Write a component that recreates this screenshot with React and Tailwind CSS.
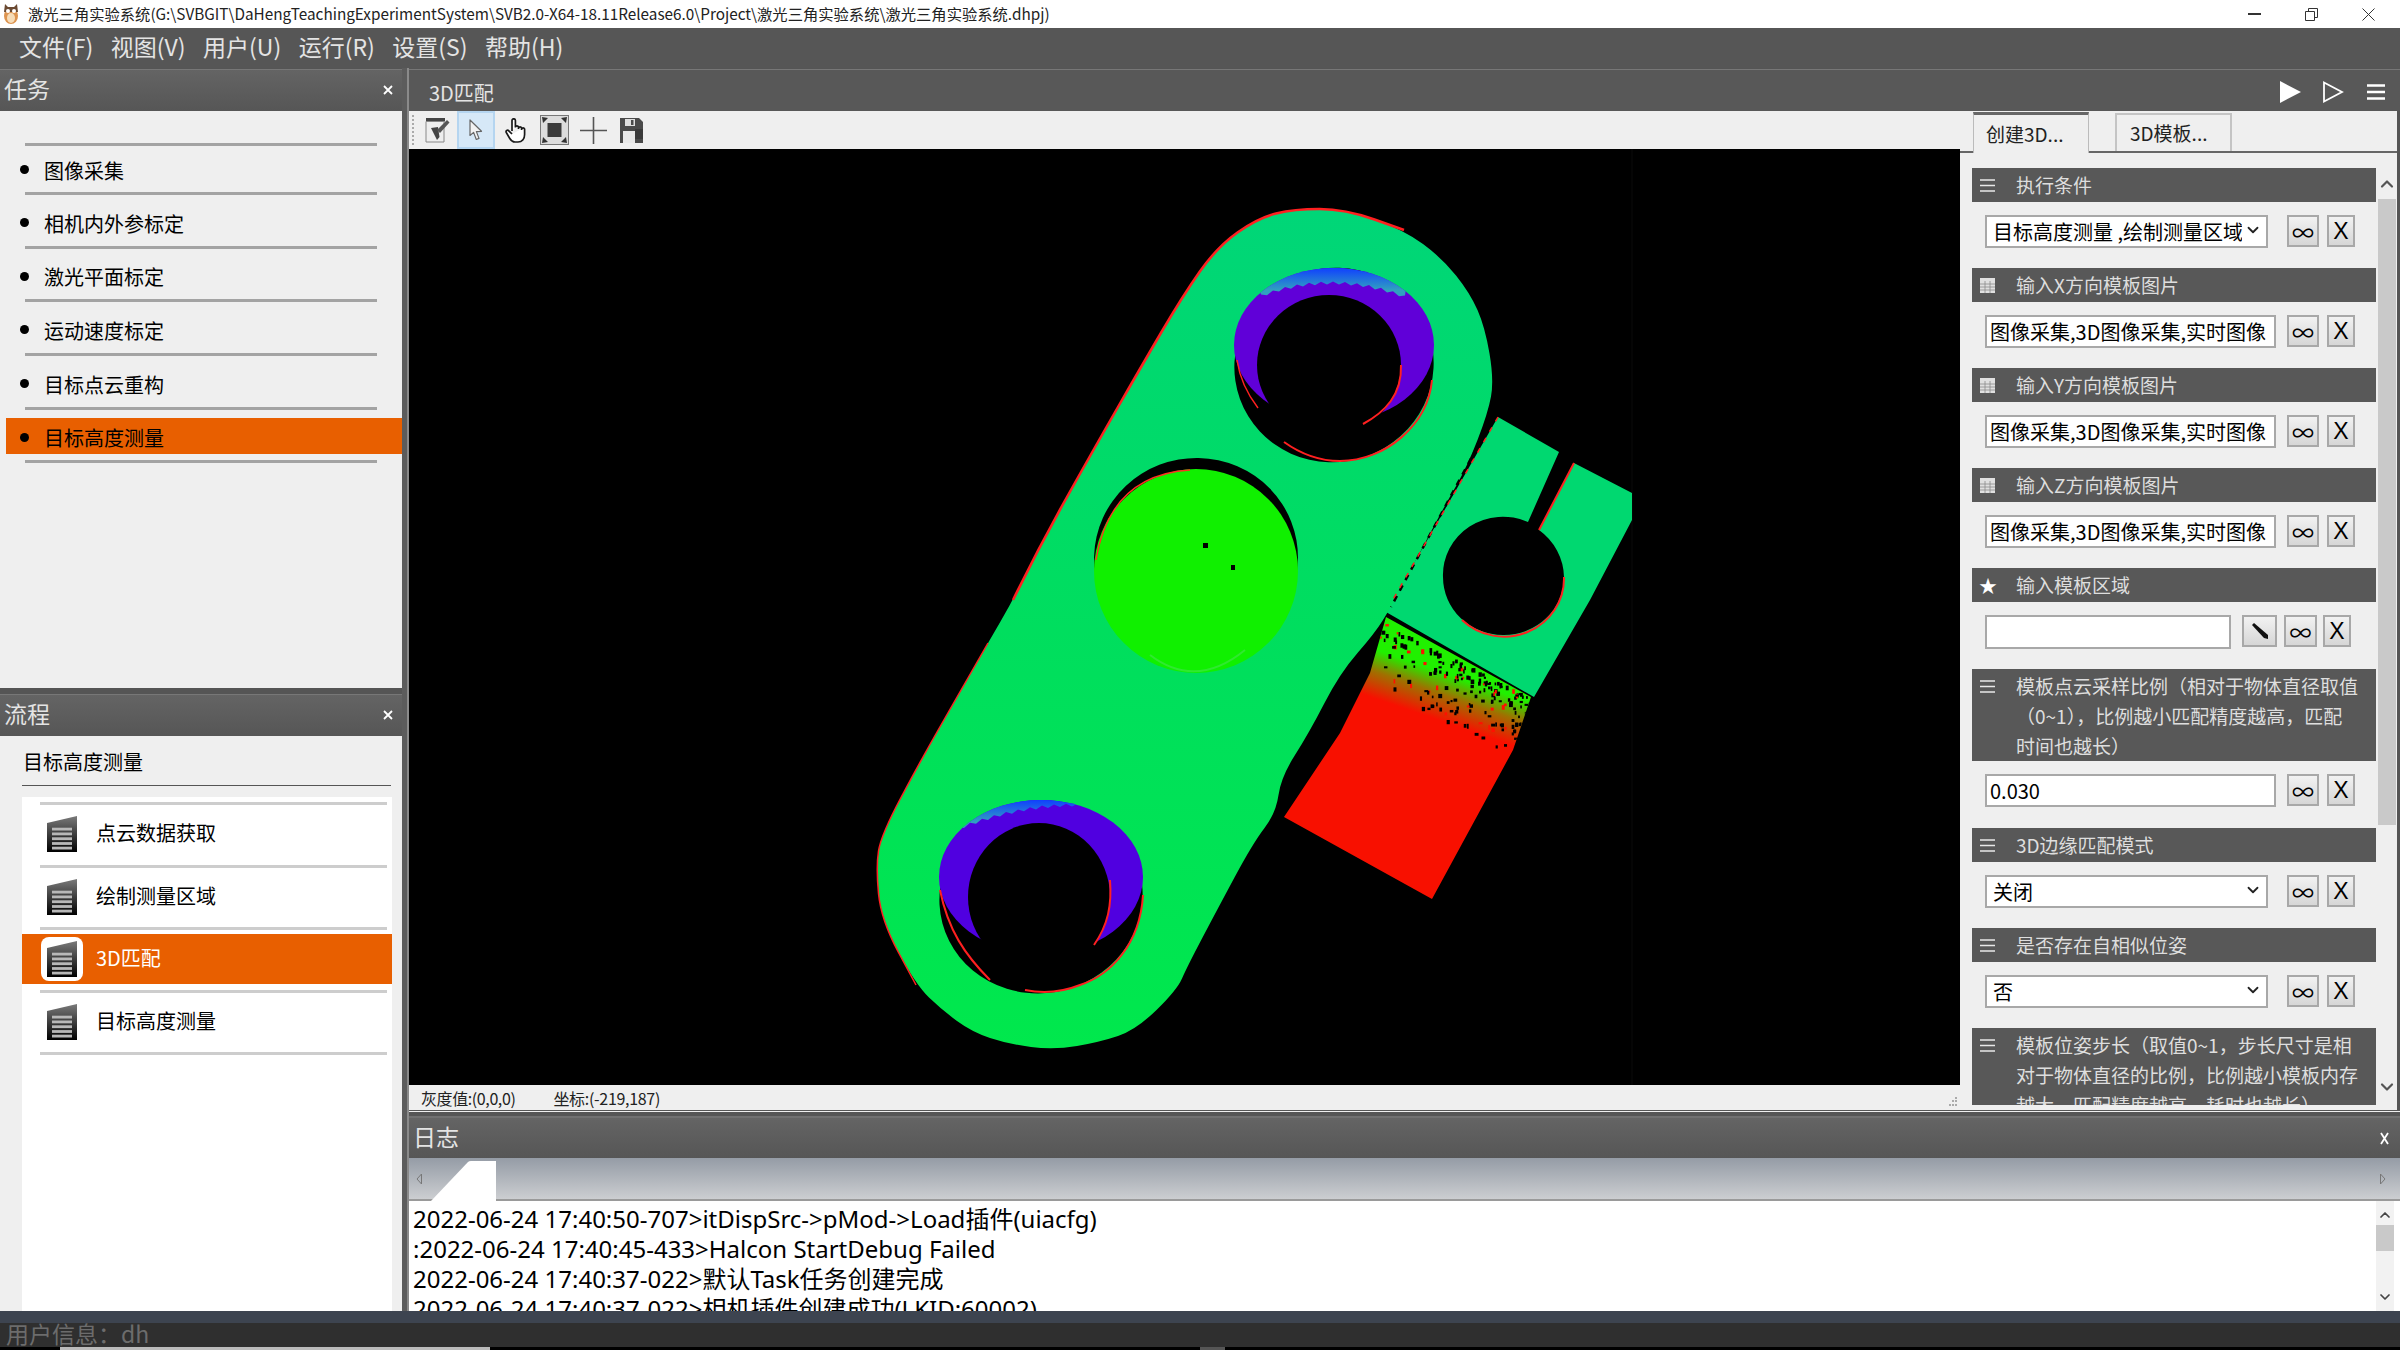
import React from "react";
import { ChevronDown, ChevronUp } from "lucide-react";

const CJK = '"Noto Sans CJK SC","Noto Sans",sans-serif';

function Owl() {
  return (
    <svg width="16" height="20" viewBox="0 0 16 20" className="ml-[3px] mr-[9px] shrink-0">
      <ellipse cx="8" cy="12" rx="7" ry="8" fill="#dd9450" />
      <ellipse cx="8" cy="14" rx="4" ry="5" fill="#f6dcb8" />
      <path d="M2 0 L5 3 L11 3 L14 0 L15 8 L1 8 Z" fill="#6b4a32" />
      <circle cx="5" cy="7" r="2" fill="#fff" />
      <circle cx="11" cy="7" r="2" fill="#fff" />
    </svg>
  );
}

function PanelHeader({ title }) {
  return (
    <div className="h-[42px] shrink-0 flex items-center justify-between bg-gradient-to-b from-[#646464] to-[#565656] border-t border-[#777] text-[#e4e4e4]">
      <span className="text-[23px] pl-[4px] leading-none -mt-[4px]">{title}</span>
      <svg width="10" height="10" viewBox="0 0 10 10" className="mr-[9px] -mt-[1px]"><path d="M1 1 L9 9 M9 1 L1 9" stroke="#fff" strokeWidth="1.8" /></svg>
    </div>
  );
}

function Line() {
  return <div className="mx-[25px] h-[3px] bg-[#a3a3a3] shrink-0" />;
}

function TaskPanel() {
  const items = ["图像采集", "相机内外参标定", "激光平面标定", "运动速度标定", "目标点云重构", "目标高度测量"];
  return (
    <div className="h-[619px] shrink-0 flex flex-col">
      <PanelHeader title="任务" />
      <div className="flex-1 bg-[#efefef] pt-[32px] flex flex-col">
        <Line />
        {items.map((t, i) => (
          <React.Fragment key={t}>
            <div
              className={`flex items-center text-[20px] text-black ml-[6px] shrink-0 h-[36px] ${i === 0 ? "mt-[4px] mb-[6px]" : "mt-[8px] mb-[6.7px]"} ${i === 5 ? "bg-[#e85f00]" : ""}`}
            >
              <span className="ml-[14px] mt-[3px] w-[9px] h-[9px] rounded-full bg-black" />
              <span className="ml-[15px] pt-[5px]">{t}</span>
            </div>
            <Line />
          </React.Fragment>
        ))}
      </div>
    </div>
  );
}

function DocIcon() {
  const id = React.useId();
  return (
    <svg width="30" height="36" viewBox="0 0 30 36">
      <defs>
        <linearGradient id={id} x1="0" y1="0" x2="0" y2="1">
          <stop offset="0" stopColor="#7a7a7a" />
          <stop offset="1" stopColor="#000" />
        </linearGradient>
      </defs>
      <path d="M0 7 L30 0 L30 36 L0 36 Z" fill={`url(#${id})`} />
      {[13, 17.8, 22.6, 27.4, 32].map((y) => (
        <rect key={y} x="5" y={y - 1.3} width="20" height="2.8" fill="#b8b8b8" />
      ))}
    </svg>
  );
}

function FlowPanel() {
  const items = ["点云数据获取", "绘制测量区域", "3D匹配", "目标高度测量"];
  return (
    <div className="flex-1 flex flex-col min-h-0">
      <PanelHeader title="流程" />
      <div className="flex-1 bg-[#efefef] flex flex-col min-h-0">
        <div className="h-[50px] ml-[22px] mr-[11px] border-b border-[#555] flex items-center text-[20px] text-black pl-[1px] pt-[2px]">目标高度测量</div>
        <div className="mt-[11px] ml-[22px] mr-[10px] flex-1 bg-white pt-[5px]">
          <div className="ml-[18px] mr-[5px] h-[3px] bg-[#cdcdcd]" />
          {items.map((t, i) => (
            <React.Fragment key={t}>
              <div className={`h-[50px] mt-[4px] mb-[5.5px] flex items-center ${i === 2 ? "bg-[#e85f00]" : ""}`}>
                <div className={`ml-[19px] w-[42px] h-[44px] flex items-center justify-center rounded-[8px] ${i === 2 ? "bg-white" : ""}`}>
                  <DocIcon />
                </div>
                <span className={`ml-[13px] text-[20px] -mt-[2px] ${i === 2 ? "text-white" : "text-black"}`}>{t}</span>
              </div>
              <div className="ml-[18px] mr-[5px] h-[3px] bg-[#cdcdcd]" />
            </React.Fragment>
          ))}
        </div>
      </div>
    </div>
  );
}

function Toolbar() {
  return (
    <div className="h-[38px] bg-[#efefef] shrink-0 flex items-center">
      <div className="ml-[3px] w-[2px] h-[30px] border-l-2 border-dotted border-[#aaa]" />
      <svg width="25" height="25" viewBox="0 0 25 25" className="ml-[11px]">
        <rect x="1" y="0" width="19" height="3.5" fill="#444" />
        <path d="M1 3.5 V24 H19 V3.5 Z" fill="#eeeeee" stroke="#888" />
        <path d="M6 10 L13 9 L14.5 19 L12 22 Z" fill="#444" />
        <path d="M12 12 L22 2 L24.5 4.5 L15 15 Z" fill="#555" />
      </svg>
      <div className="ml-[7px] w-[38px] h-[38px] bg-[#d6e8f7] border-2 border-[#b5d5f0] flex items-center justify-center">
        <svg width="14" height="22" viewBox="0 0 14 22">
          <path d="M1 1 L1 16.5 L4.6 13.4 L7.3 20.5 L10 19.4 L7.4 12.6 L12.5 12.3 Z" fill="#f2f2f2" stroke="#666" strokeWidth="1.2" strokeLinejoin="round" />
        </svg>
      </div>
      <svg width="21" height="25" viewBox="0 0 21 25" className="ml-[10px]">
        <path d="M7 13 V2.5 A1.7 1.7 0 0 1 10.4 2.5 V9.5 M10.4 9 A1.6 1.6 0 0 1 13.5 9 V11 M13.5 10 A1.6 1.6 0 0 1 16.6 10 V12 M16.6 11 A1.6 1.6 0 0 1 19.6 11 V16.5 C19.6 21 17 24 13 24 H10 C7.5 24 6 22.5 4.5 20 L1.3 14.5 C0.4 12.8 2.5 11.5 3.8 12.8 L7 16" fill="#fff" stroke="#1a1a1a" strokeWidth="1.7" strokeLinejoin="round" />
      </svg>
      <svg width="29" height="30" viewBox="0 0 29 30" className="ml-[14px]">
        <rect x="0.5" y="0.5" width="28" height="29" fill="#dcdcdc" stroke="#777" />
        <rect x="7.5" y="8" width="14" height="14" fill="#3a3a3a" />
        <path d="M2 2 L8 3 L3 8 Z M27 2 L21 3 L26 8 Z M2 28 L8 27 L3 22 Z M27 28 L21 27 L26 22 Z" fill="#333" />
      </svg>
      <svg width="27" height="27" viewBox="0 0 27 27" className="ml-[11px]">
        <path d="M13.5 0 V27 M0 13.5 H27" stroke="#555" strokeWidth="1.6" />
      </svg>
      <svg width="24" height="25" viewBox="0 0 24 25" className="ml-[13px]">
        <path d="M0 0 H19 L23 4 V25 H0 Z" fill="#4a4a4a" />
        <rect x="5" y="1" width="10" height="7" fill="#dedede" />
        <rect x="11" y="2" width="2.5" height="5" fill="#4a4a4a" />
        <rect x="3" y="13" width="12" height="12" fill="#e8e8e8" />
        <rect x="15" y="11" width="8" height="10" fill="#3a3a3a" />
      </svg>
    </div>
  );
}

function smooth(pts, closed) {
  const mid = (a, b) => [(a[0] + b[0]) / 2, (a[1] + b[1]) / 2];
  if (closed) {
    const n = pts.length;
    const s = mid(pts[n - 1], pts[0]);
    let d = `M${s[0]} ${s[1]}`;
    for (let i = 0; i < n; i++) {
      const m = mid(pts[i], pts[(i + 1) % n]);
      d += ` Q${pts[i][0]} ${pts[i][1]} ${m[0]} ${m[1]}`;
    }
    return d + " Z";
  }
  let d = `M${pts[0][0]} ${pts[0][1]}`;
  for (let i = 1; i < pts.length - 1; i++) {
    const m = mid(pts[i], pts[i + 1]);
    d += ` Q${pts[i][0]} ${pts[i][1]} ${m[0]} ${m[1]}`;
  }
  const l = pts[pts.length - 1];
  return d + ` L${l[0]} ${l[1]}`;
}

function Crescent({ idp, A, B, hole, band, grad }) {
  return (
    <g>
      <clipPath id={idp}>
        <path d={band} />
      </clipPath>
      <ellipse cx={hole[0]} cy={hole[1]} rx={hole[2]} ry={hole[3]} fill="#000" transform={`rotate(${hole[4]} ${hole[0]} ${hole[1]})`} />
      <ellipse cx={A[0]} cy={A[1]} rx={A[2]} ry={A[3]} fill={A[4]} />
      <ellipse cx={A[0]} cy={A[1]} rx={A[2]} ry={A[3]} fill={grad} clipPath={`url(#${idp})`} />
      <ellipse cx={B[0]} cy={B[1]} rx={B[2]} ry={B[3]} fill="#000" />
    </g>
  );
}

function Viewer() {
  const bodyPts = [[1294, 209], [1345, 209], [1404, 230], [1442, 258], [1470, 293], [1485, 327], [1494, 380], [1488, 413], [1467, 467], [1444, 507], [1416, 560], [1391, 607], [1375, 633], [1340, 673], [1309, 733], [1281, 777], [1276, 813], [1253, 843], [1217, 910], [1187, 967], [1177, 990], [1136, 1030], [1100, 1042], [1054, 1050], [1008, 1044], [972, 1032], [942, 1010], [916, 985], [881, 920], [876, 867], [881, 835], [921, 760], [957, 697], [988, 643], [1013, 600], [1039, 547], [1095, 447], [1141, 367], [1182, 297], [1217, 247], [1258, 218]];
  const body = smooth(bodyPts, true);
  const edge1 = smooth([[1013, 600], [1039, 547], [1095, 447], [1141, 367], [1182, 297], [1217, 247], [1258, 218], [1294, 209], [1345, 209], [1404, 230]], false);
  const edge2 = smooth([[988, 643], [957, 697], [921, 760], [881, 835], [876, 867], [881, 920], [916, 985]], false);
  const lobe = "M1498 417 L1559 452 L1528 522 A60 58 0 0 0 1443 577 A60 58 0 0 0 1503 635 A60 58 0 0 0 1564 577 A 62 60 0 0 0 1539 530 L1574 463 L1632 493 L1632 520 L1590 600 L1534 697 L1386 612 L1391 603 Z";
  const block = "M1386 617 L1531 697 L1513 750 L1432 899 L1284 817 L1340 733 L1370 673 Z";
  let s = 11;
  const rnd = () => ((s = (s * 16807) % 2147483647) / 2147483647);
  const dots = [];
  for (let i = 0; i < 200; i++) {
    const a = rnd();
    const b = Math.pow(rnd(), 1.8);
    const x = 1378 + a * 152 + b * 6;
    const y = 620 + a * 78 + b * 70;
    dots.push(<rect key={i} x={x} y={y} width={1.5 + rnd() * 2.5} height={2 + rnd() * 3} fill={i % 6 === 0 ? "#ff1000" : "#000"} />);
  }
  const jag = (x0, x1, yAt) => {
    let d = "";
    let j = 0;
    for (let x = x1; x >= x0; x -= 6) {
      const t = (x - x0) / (x1 - x0);
      const yy = yAt(t) + (j++ % 2 ? 1.5 : -1.5);
      d += ` L${x} ${yy.toFixed(1)}`;
    }
    return d;
  };
  return (
    <svg viewBox="409 149 1551 936" width="1551" height="936" className="block bg-black shrink-0">
      <defs>
        <linearGradient id="bodyG" gradientUnits="userSpaceOnUse" x1="0" y1="211" x2="0" y2="1049">
          <stop offset="0" stopColor="#00d678" />
          <stop offset="0.5" stopColor="#00de5e" />
          <stop offset="1" stopColor="#00e84c" />
        </linearGradient>
        <linearGradient id="blockG" gradientUnits="userSpaceOnUse" x1="1444" y1="722" x2="1459" y2="678">
          <stop offset="0" stopColor="#f81000" />
          <stop offset="0.55" stopColor="#a07000" />
          <stop offset="1" stopColor="#20f000" />
        </linearGradient>
        <linearGradient id="blueA" gradientUnits="userSpaceOnUse" x1="0" y1="268" x2="0" y2="290">
          <stop offset="0" stopColor="#1040ff" />
          <stop offset="1" stopColor="#30a0c0" />
        </linearGradient>
        <linearGradient id="blueB" gradientUnits="userSpaceOnUse" x1="0" y1="800" x2="0" y2="822">
          <stop offset="0" stopColor="#1040ff" />
          <stop offset="1" stopColor="#30a0c0" />
        </linearGradient>
        <clipPath id="blockClip"><path d={block} /></clipPath>
      </defs>
      <path d="M1632 149 V1085" stroke="#0a0a0a" />
      <path d={lobe} fill="#00d870" fillRule="evenodd" />
      <path d={body} fill="url(#bodyG)" />
      <path d={edge1} fill="none" stroke="#ff2020" strokeWidth="2.5" />
      <path d={edge2} fill="none" stroke="#ff2020" strokeWidth="1.5" />
      <path d="M1488 427 L1391 607" stroke="#000" strokeWidth="2.5" strokeDasharray="6 6" />
      <path d="M1498 417 L1391 603" stroke="#ff2020" strokeWidth="1.5" strokeDasharray="5 7" />
      <path d="M1574 463 L1539 530 M1462 620 A60 58 0 0 0 1564 577" stroke="#ff2020" strokeWidth="2" fill="none" />
      <path d={block} fill="url(#blockG)" />
      <g clipPath="url(#blockClip)">{dots}</g>
      {/* upper hole */}
      <Crescent idp="bandA" hole={[1334, 365, 100, 97, -20]} A={[1334, 345, 100, 77, "#6000d8"]} B={[1329, 365, 72, 70]} grad="url(#blueA)"
        band={`M1250 262 H1410${jag(1258, 1405, (t) => 283 + 14 * Math.pow(2 * t - 1, 2))} Z`} />
      <path d="M1432 380 C1428 425 1385 461 1340 461 C1318 461 1298 452 1284 442" fill="none" stroke="#ff2020" strokeWidth="2" />
      <path d="M1237 360 C1240 380 1248 395 1258 408" fill="none" stroke="#ff2020" strokeWidth="1.5" />
      <path d="M1363 424 C1385 412 1402 395 1401 365" fill="none" stroke="#ff2020" strokeWidth="2" />
      {/* disc */}
      <ellipse cx="1196" cy="558" rx="102" ry="100" fill="#000" transform="rotate(-10 1196 558)" />
      <ellipse cx="1196" cy="571" rx="102" ry="102" fill="#10f000" />
      <path d="M1150 655 Q1196 690 1245 650" fill="none" stroke="#30e830" strokeWidth="2" />
      <path d="M1096 560 Q1110 475 1190 470" fill="none" stroke="#ff3020" strokeWidth="1.5" />
      <rect x="1203" y="543" width="5" height="5" fill="#000" />
      <rect x="1231" y="565" width="4" height="5" fill="#000" />
      {/* lower hole */}
      <Crescent idp="bandB" hole={[1041, 897, 102, 96, -15]} A={[1041, 877, 102, 77, "#5000e0"]} B={[1039, 897, 71, 74]} grad="url(#blueB)"
        band={`M950 790 H1080 V804${jag(955, 1078, (t) => 805 + 25 * Math.pow(1 - t, 2))} Z`} />
      <path d="M1143 895 C1140 945 1110 975 1080 985 C1060 993 1040 993 1025 990 M940 890 C948 930 965 955 990 980" fill="none" stroke="#ff2020" strokeWidth="2" />
      <path d="M1094 945 C1108 925 1112 905 1110 880" fill="none" stroke="#ff2020" strokeWidth="2" />
    </svg>
  );
}

function Btn({ children, w, ml }) {
  return (
    <div style={{ width: w, marginLeft: ml }} className="h-[32px] shrink-0 border-2 border-[#a8a8a8] bg-gradient-to-b from-[#f2f2f2] to-[#d6d6d6] flex items-center justify-center text-black">
      {children}
    </div>
  );
}

const Inf = () => <span className="text-[22px] leading-none">∞</span>;
const Xx = () => <span className="text-[23px] leading-none" style={{ fontFamily: '"Liberation Sans"' }}>X</span>;

function Ctl({ type, value }) {
  if (type === "area") {
    return (
      <div className="pl-[13px] pt-[13px] pb-[20px] h-[67px] flex items-start">
        <div className="w-[246px] h-[34px] border-2 border-[#a8a8a8] bg-white" />
        <Btn w={35} ml={11}>
          <svg width="18" height="18" viewBox="0 0 18 18"><path d="M1 3 L3 1 L17 13 L17 17 L13 16 Z" fill="#111" /></svg>
        </Btn>
        <Btn w={33} ml={7}><Inf /></Btn>
        <Btn w={28} ml={6}><Xx /></Btn>
      </div>
    );
  }
  const sel = type === "select";
  return (
    <div className="pl-[13px] pt-[13px] pb-[20px] h-[66px] flex items-start">
      <div className={`h-[33px] border-2 border-[#a8a8a8] bg-white text-black text-[20px] leading-[25px] flex items-center overflow-hidden shrink-0 ${sel ? "w-[283px] pl-[6px] pr-[4px]" : "w-[291px] pl-[3px]"}`}>
        <span className={`whitespace-nowrap overflow-hidden ${sel ? "flex-1" : ""}`}>{value}</span>
        {sel && <ChevronDown size={18} strokeWidth={2.4} color="#222" className="shrink-0 ml-[2px] -mt-[3px]" />}
      </div>
      <Btn w={32} ml={sel ? 19 : 11}><Inf /></Btn>
      <Btn w={28} ml={8}><Xx /></Btn>
    </div>
  );
}

function GroupIcon({ kind }) {
  if (kind === "list")
    return (
      <svg width="15" height="15" viewBox="0 0 15 15">
        <path d="M0 2 H15 M0 7.5 H15 M0 13 H15" stroke="#e8e8e8" strokeWidth="1.6" />
      </svg>
    );
  if (kind === "grid")
    return (
      <svg width="15" height="15" viewBox="0 0 15 15">
        <rect width="15" height="15" fill="#e0e0e0" />
        <path d="M5 3 V15 M10 3 V15 M0 6 H15 M0 9 H15 M0 12 H15" stroke="#8a8a8a" strokeWidth="0.8" />
      </svg>
    );
  return <span className="text-[18px] leading-[15px] text-white block w-[15px] -ml-[1px]">★</span>;
}

function Group({ icon, lines, h = 34 }) {
  return (
    <div style={{ height: h }} className={`bg-[#585858] flex items-start text-[#dedede] text-[19px] leading-[30px] whitespace-nowrap overflow-hidden ${lines.length > 1 ? "pt-[2px]" : ""}`}>
      <div className={`w-[44px] pl-[8px] flex items-center shrink-0 ${lines.length > 1 ? "h-[30px]" : "h-[34px]"}`}>
        <GroupIcon kind={icon} />
      </div>
      <div className={lines.length > 1 ? "" : "leading-[33px]"}>
        {lines.map((l, i) => (
          <div key={i}>{l}</div>
        ))}
      </div>
    </div>
  );
}

function RightPanel() {
  const img = "图像采集,3D图像采集,实时图像";
  return (
    <div className="w-[437px] mr-[3px] h-full bg-[#efefef] shrink-0 flex flex-col">
      <div className="h-[42px] shrink-0 flex items-end border-b-[2px] border-[#666] pl-[13px]">
        <div className="w-[116px] h-[41px] -mb-[2px] bg-[#efefef] border-t-[3px] border-t-[#666] border-x border-x-[#bbb] flex items-center pl-[12px] text-[19px] text-[#222]">创建3D...</div>
        <div className="ml-[26px] w-[117px] h-[38px] border-t-2 border-x-2 border-[#c4c4c4] flex items-center pl-[13px] text-[19px] text-[#222]">3D模板...</div>
      </div>
      <div className="h-[937px] mt-[15px] shrink-0 flex pl-[12px] overflow-hidden">
        <div className="w-[404px] shrink-0">
          <Group icon="list" lines={["执行条件"]} />
          <Ctl type="select" value="目标高度测量 ,绘制测量区域" />
          <Group icon="grid" lines={["输入X方向模板图片"]} />
          <Ctl value={img} />
          <Group icon="grid" lines={["输入Y方向模板图片"]} />
          <Ctl value={img} />
          <Group icon="grid" lines={["输入Z方向模板图片"]} />
          <Ctl value={img} />
          <Group icon="star" lines={["输入模板区域"]} />
          <Ctl type="area" />
          <Group icon="list" h={92} lines={["模板点云采样比例（相对于物体直径取值", "（0~1），比例越小匹配精度越高，匹配", "时间也越长）"]} />
          <div className="pl-[13px] pt-[13px] pb-[20px] h-[67px] flex items-start">
            <div className="w-[291px] h-[33px] border-2 border-[#a8a8a8] bg-white text-black text-[20px] pl-[3px] flex items-center">0.030</div>
            <Btn w={32} ml={11}><Inf /></Btn>
            <Btn w={28} ml={8}><Xx /></Btn>
          </div>
          <Group icon="list" lines={["3D边缘匹配模式"]} />
          <Ctl type="select" value="关闭" />
          <Group icon="list" lines={["是否存在自相似位姿"]} />
          <Ctl type="select" value="否" />
          <Group icon="list" h={92} lines={["模板位姿步长（取值0~1，步长尺寸是相", "对于物体直径的比例，比例越小模板内存", "越大，匹配精度越高，耗时也越长）"]} />
        </div>
        <div className="w-[18px] ml-[2px] shrink-0 flex flex-col items-center">
          <div className="h-[31px] flex items-center justify-center shrink-0"><ChevronUp size={20} strokeWidth={2.6} color="#555" /></div>
          <div className="w-full h-[626px] bg-[#c9c9c9] shrink-0" />
          <div className="h-[252px] shrink-0" />
          <ChevronDown size={20} strokeWidth={2.6} color="#555" className="shrink-0" />
        </div>
      </div>
    </div>
  );
}

function CenterPanel() {
  return (
    <div className="h-[1042px] shrink-0 flex flex-col">
      <div className="h-[42px] mt-[1px] shrink-0 flex items-center bg-[#585858] border-t border-[#777] text-[#e4e4e4]">
        <span className="ml-[20px] mt-[4px] text-[20px] leading-none">3D匹配</span>
        <div className="ml-auto flex items-center mr-[15px] mt-[2px]">
          <svg width="21" height="22" viewBox="0 0 21 22"><path d="M0 0 L21 11 L0 22 Z" fill="#fff" /></svg>
          <svg width="21" height="22" viewBox="0 0 21 22" className="ml-[22px]"><path d="M1 1.5 L19 11 L1 20.5 Z" fill="none" stroke="#fff" strokeWidth="1.8" /></svg>
          <svg width="18" height="16" viewBox="0 0 18 16" className="ml-[23px]"><path d="M0 1.5 H18 M0 8 H18 M0 14.5 H18" stroke="#fff" strokeWidth="2.4" /></svg>
        </div>
      </div>
      <div className="flex-1 flex min-h-0">
        <div className="w-[1551px] shrink-0 flex flex-col bg-[#efefef]">
          <Toolbar />
          <Viewer />
          <div className="flex-1 flex items-center text-[16px] text-[#222] leading-none">
            <span className="ml-[12px] tracking-[-0.4px]">灰度值:(0,0,0)</span>
            <span className="ml-[38px] tracking-[-0.3px]">坐标:(-219,187)</span>
            <svg width="12" height="12" viewBox="0 0 12 12" className="ml-auto mr-[2px] mt-[8px]">
              <path d="M10 1 V3 M7 4 V6 M10 4 V6 M4 8 V10 M7 8 V10 M10 8 V10" stroke="#aaa" strokeWidth="2" />
            </svg>
          </div>
        </div>
        <RightPanel />
      </div>
    </div>
  );
}

function LogPanel() {
  const logs = [
    "2022-06-24 17:40:50-707>itDispSrc->pMod->Load插件(uiacfg)",
    ":2022-06-24 17:40:45-433>Halcon StartDebug Failed",
    "2022-06-24 17:40:37-022>默认Task任务创建完成",
    "2022-06-24 17:40:37-022>相机插件创建成功(LKID:60002)",
  ];
  return (
    <div className="flex-1 flex flex-col min-h-0 mt-[1px] border-t-[1px] border-[#eee]">
      <div className="h-[4px] bg-[#555] shrink-0" />
      <div className="h-[42px] shrink-0 flex items-center justify-between bg-gradient-to-b from-[#646464] to-[#565656] border-t-2 border-[#707070] text-[#e4e4e4]">
        <span className="text-[23px] pl-[4px] leading-none -mt-[4px]">日志</span>
        <svg width="9" height="13" viewBox="0 0 9 13" className="mr-[11px]"><path d="M1 1 L8 12 M8 1 L1 12" stroke="#fff" strokeWidth="1.8" /></svg>
      </div>
      <div className="h-[43px] shrink-0 flex items-end bg-gradient-to-b from-[#959ca6] to-[#ccced1] border-b-2 border-[#9a9a9a]">
        <div className="h-full flex items-center ml-[7px] w-[15px]">
          <svg width="6" height="12" viewBox="0 0 6 12"><path d="M5.5 1 L1 6 L5.5 11 Z" fill="none" stroke="#777" /></svg>
        </div>
        <svg width="65" height="41" viewBox="0 0 65 41" className="shrink-0 -mb-[2px]"><path d="M0 41 L37 2 Q38 1 40 1 L65 1 L65 41 Z" fill="#fff" /></svg>
        <div className="h-full flex items-center ml-auto mr-[14px]">
          <svg width="6" height="12" viewBox="0 0 6 12"><path d="M0.5 1 L5 6 L0.5 11 Z" fill="none" stroke="#777" /></svg>
        </div>
      </div>
      <div className="flex-1 bg-white flex overflow-hidden min-h-0">
        <div className="flex-1 pl-[4px] pt-[3px] text-[24px] leading-[30px] text-black whitespace-nowrap overflow-hidden" style={{ fontFamily: '"Noto Sans","Noto Sans CJK SC",sans-serif' }}>
          {logs.map((l) => <div key={l}>{l}</div>)}
        </div>
        <div className="w-[18px] mr-[6px] shrink-0 bg-[#f2f2f2] flex flex-col items-center">
          <ChevronUp size={16} strokeWidth={2.6} color="#444" className="mt-[6px] shrink-0" />
          <div className="w-full h-[26px] bg-[#c9c9c9] mt-[2px] shrink-0" />
          <ChevronDown size={16} strokeWidth={2.6} color="#444" className="mt-[38px] shrink-0" />
        </div>
      </div>
    </div>
  );
}

export default function App() {
  const menus = ["文件(F)", "视图(V)", "用户(U)", "运行(R)", "设置(S)", "帮助(H)"];
  return (
    <div className="w-[2400px] h-[1350px] flex flex-col overflow-hidden bg-[#555]" style={{ fontFamily: CJK }}>
      <div className="h-[28px] shrink-0 bg-white flex items-center text-[#222]">
        <Owl />
        <span className="text-[15.3px] leading-none whitespace-nowrap">激光三角实验系统(G:\SVBGIT\DaHengTeachingExperimentSystem\SVB2.0-X64-18.11Release6.0\Project\激光三角实验系统\激光三角实验系统.dhpj)</span>
        <div className="ml-auto flex items-center mr-[25px]">
          <div className="w-[13px] h-[2px] bg-[#333]" />
          <svg width="13" height="13" viewBox="0 0 13 13" className="ml-[44px]"><path d="M0.5 3.5 H9.5 V12.5 H0.5 Z M3.5 3.5 V0.5 H12.5 V9.5 H9.5" fill="none" stroke="#333" /></svg>
          <svg width="13" height="13" viewBox="0 0 13 13" className="ml-[44px]"><path d="M0.5 0.5 L12.5 12.5 M12.5 0.5 L0.5 12.5" stroke="#333" /></svg>
        </div>
      </div>
      <div className="h-[40px] shrink-0 bg-[#565656] flex items-center text-[#e4e4e4] text-[23px] leading-none pl-[19px] pb-[3px] gap-[17.5px]">
        {menus.map((m) => <span key={m}>{m}</span>)}
      </div>
      <div className="h-[1243px] shrink-0 flex">
        <div className="w-[402px] shrink-0 flex flex-col gap-[6px] pt-[1px]">
          <TaskPanel />
          <FlowPanel />
        </div>
        <div className="w-[7px] shrink-0 bg-[#5c5c5c] border-r-2 border-[#8a8a8a]" />
        <div className="flex-1 min-w-0 flex flex-col">
          <CenterPanel />
          <LogPanel />
        </div>
      </div>
      <div className="flex-1 flex flex-col bg-[#2f2f2f]">
        <div className="h-[12px] bg-[#3d4450]" />
        <div className="h-[24px] flex items-center pl-[6px] text-[23px] leading-none text-[#6c6c6c] pb-[4px]">用户信息：dh</div>
        <div className="h-[3px] bg-black flex">
          <div className="ml-[60px] w-[430px] bg-[#bbb]" />
          <div className="ml-[710px] w-[25px] bg-[#555]" />
        </div>
      </div>
    </div>
  );
}
